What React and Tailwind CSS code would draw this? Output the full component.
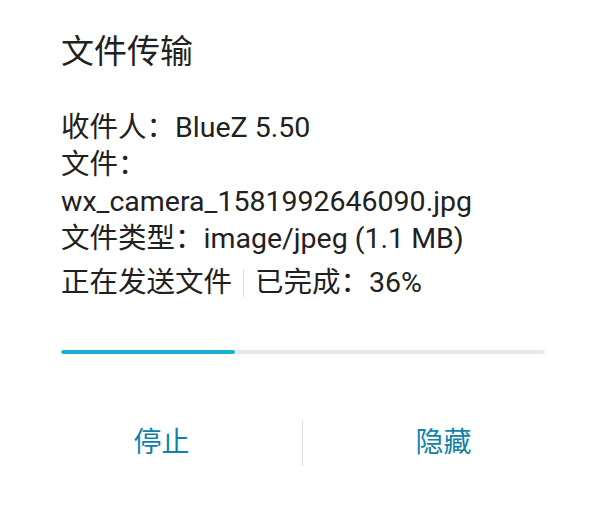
export default function App() {
  const progress = 36;
  return (
    <div
      className="w-[606px] h-[510px] bg-white text-[#212121] overflow-hidden"
      style={{ fontFamily: 'Roboto, "Noto Sans CJK SC", sans-serif' }}
    >
      <div className="pl-[61px] pr-[61px] pt-[29px]">
        <h1 className="text-[33px] leading-[46px] font-normal">文件传输</h1>
        <div className="mt-[34px] text-[28.5px] leading-[37px]">
          <div>收件人：BlueZ 5.50</div>
          <div>文件：</div>
          <div>wx_camera_1581992646090.jpg</div>
          <div>文件类型：image/jpeg (1.1 MB)</div>
          <div className="mt-[7px] flex items-center">
            <span>正在发送文件</span>
            <span className="mx-[11px] w-px h-[28px] bg-[#e0e0e0]" />
            <span>已完成：{progress}%</span>
          </div>
        </div>
        <div className="mt-[49px] h-[4px] w-full rounded-full bg-[#e8e8e8] overflow-hidden">
          <div className="h-full rounded-full bg-[#17b0dc]" style={{ width: `${progress}%` }} />
        </div>
      </div>
      <div className="mt-[66px] flex items-center h-[46px]">
        <button className="flex-1 h-full text-[28px] text-[#1282a8] pl-[21px]">停止</button>
        <span className="w-px h-[46px] bg-[#e0e0e0]" />
        <button className="flex-1 h-full text-[28px] text-[#1282a8] pr-[22px]">隐藏</button>
      </div>
    </div>
  );
}
